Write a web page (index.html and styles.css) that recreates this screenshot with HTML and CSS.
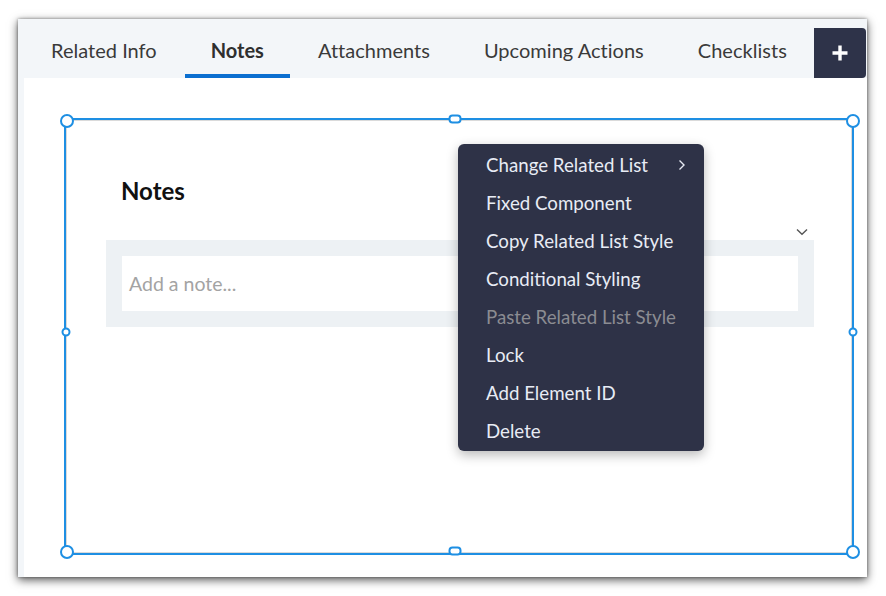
FILE: index.html
```html
<!DOCTYPE html>
<html>
<head>
<meta charset="utf-8">
<link rel="stylesheet" href="styles.css">
</head>
<body>
<div class="window">
  <div class="tabbar">
    <div class="tabs">
      <div class="tab">Related Info</div>
      <div class="tab active">Notes</div>
      <div class="tab">Attachments</div>
      <div class="tab">Upcoming Actions</div>
      <div class="tab">Checklists</div>
    </div>
    <div class="add-btn">
      <svg width="18" height="18" viewBox="0 0 18 18"><path d="M9 1.5V16.5M1.5 9H16.5" stroke="#fff" stroke-width="3.4" fill="none"/></svg>
    </div>
  </div>
  <div class="content">
    <div class="component">
      <span class="handle corner tl"></span>
      <span class="handle corner tr"></span>
      <span class="handle corner bl"></span>
      <span class="handle corner br"></span>
      <span class="handle mid-h tm"></span>
      <span class="handle mid-h bm"></span>
      <span class="handle mid-v lm"></span>
      <span class="handle mid-v rm"></span>
      <h2 class="card-title">Notes</h2>
      <div class="card-tools">
        <svg width="12" height="8" viewBox="0 0 12 8"><path d="M1 1.5L6 6.2L11 1.5" stroke="#555" stroke-width="1.4" fill="none"/></svg>
      </div>
      <div class="notes-panel">
        <div class="note-input">Add a note...</div>
      </div>
    </div>
    <div class="menu">
      <div class="menu-item">Change Related List
        <svg width="8" height="12" viewBox="0 0 8 12"><path d="M1.5 1.5L6 6L1.5 10.5" stroke="#e6eaf3" stroke-width="1.4" fill="none"/></svg>
      </div>
      <div class="menu-item">Fixed Component</div>
      <div class="menu-item">Copy Related List Style</div>
      <div class="menu-item">Conditional Styling</div>
      <div class="menu-item disabled">Paste Related List Style</div>
      <div class="menu-item">Lock</div>
      <div class="menu-item">Add Element ID</div>
      <div class="menu-item">Delete</div>
    </div>
  </div>
</div>
</body>
</html>
```

FILE: styles.css
```css
* { box-sizing: border-box; }
html, body { margin: 0; padding: 0; background: #fff; }
body {
  font-family: Lato, "Open Sans", sans-serif;
  width: 886px;
  height: 596px;
  overflow: hidden;
}
.window {
  margin: 19px 0 0 18px;
  width: 849px;
  height: 558px;
  background: #f3f6f9;
  padding-left: 6px;
  display: flex;
  flex-direction: column;
  box-shadow: 0 3px 9px rgba(0,0,0,0.65), 0 0 3px rgba(0,0,0,0.4);
}
.tabbar {
  height: 59px;
  display: flex;
  align-items: flex-end;
  flex: none;
}
.tabs { display: flex; height: 59px; }
.tab {
  position: relative;
  height: 59px;
  padding: 2px 27px 0;
  display: flex;
  align-items: center;
  font-size: 20px;
  letter-spacing: 0.02px;
  color: #3a3a3a;
  white-space: nowrap;
}
.tab.active { font-weight: 700; color: #2f2f2f; letter-spacing: 0; }
.tab.active::after {
  content: "";
  position: absolute;
  left: 1px; right: 1px; bottom: 0;
  height: 4px;
  background: #0b6fd0;
}
.add-btn {
  width: 52px;
  height: 50px;
  background: #2e3349;
  border-radius: 0 4px 4px 0;
  display: flex;
  align-items: center;
  justify-content: center;
}
.content {
  flex: 1;
  background: #fff;
  position: relative;
  display: flex;
  flex-direction: column;
  padding: 40px 13px 22px 40px;
}
.component {
  flex: 1;
  position: relative;
  border: 2px solid #1e8fe3;
  box-shadow: inset 0 0 0 1px #dadada;
}
.handle {
  position: absolute;
  background: #fff;
  border: 2px solid #1e8fe3;
  transform: translate(-50%, -50%);
  z-index: 2;
}
.corner { width: 14px; height: 14px; border-radius: 50%; }
.tl { left: 1px; top: 1px; }
.tr { left: calc(100% + 1px); top: 0.5px; }
.bl { left: 1px; top: calc(100% - 1px); }
.br { left: calc(100% + 1px); top: calc(100% - 1px); }
.mid-h { width: 13px; height: 9px; border-radius: 4px; left: 388.5px; }
.tm { top: -1.5px; }
.bm { top: calc(100% - 2px); }
.mid-v { width: 9px; height: 9px; border-radius: 50%; top: 212px; }
.lm { left: -0.5px; }
.rm { left: calc(100% + 1px); }
.card-title {
  margin: 0;
  padding: 58px 0 0 55px;
  font-size: 24px;
  line-height: 26px;
  font-weight: 700;
  color: #111;
}
.card-tools {
  display: flex;
  justify-content: flex-end;
  padding-right: 44px;
  margin-top: 24px;
  height: 8px;
}
.card-tools svg { display: block; }
.notes-panel {
  margin: 4px 38px 0 40px;
  background: #edf1f4;
  padding: 16px;
}
.note-input {
  background: #fff;
  height: 55px;
  line-height: 56px;
  padding-left: 7px;
  font-size: 19.5px;
  color: #a3a3a3;
}
.menu {
  position: absolute;
  left: 434px;
  top: 66px;
  width: 246px;
  padding: 2px 0 1px;
  background: #2e3247;
  border-radius: 6px;
  box-shadow: 0 4px 12px rgba(0,0,0,0.28);
  z-index: 5;
}
.menu-item {
  height: 38px;
  line-height: 38px;
  padding: 0 18px 0 28px;
  font-size: 18.7px;
  color: #e8ecf5;
  display: flex;
  align-items: center;
  justify-content: space-between;
  white-space: nowrap;
}
.menu-item.disabled { color: #8b8c92; }
```
